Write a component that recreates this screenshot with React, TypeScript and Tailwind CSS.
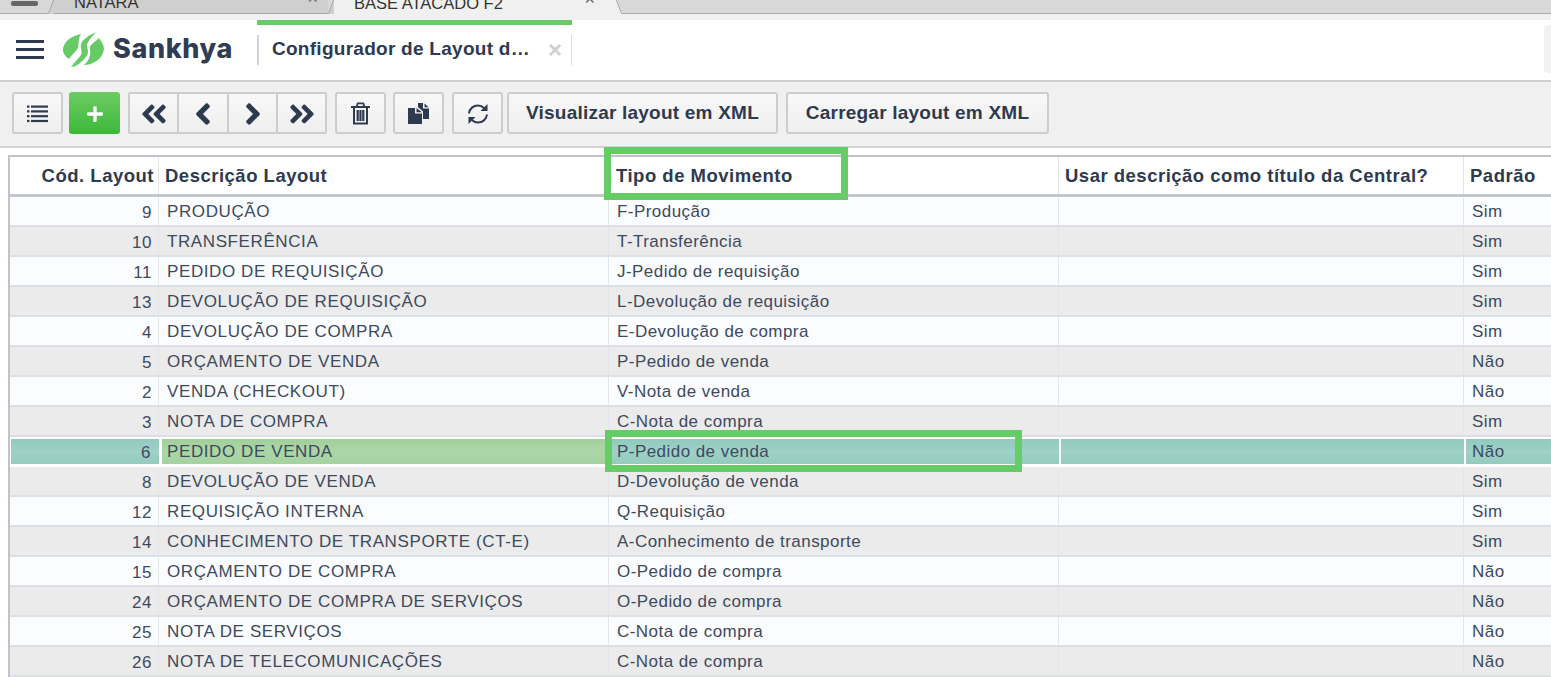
import React from "react";
import { FaPlus, FaAngleDoubleLeft, FaAngleLeft, FaAngleRight, FaAngleDoubleRight } from "react-icons/fa";

const rows: [string, string, string, string][] = [
  ["9", "PRODUÇÃO", "F-Produção", "Sim"],
  ["10", "TRANSFERÊNCIA", "T-Transferência", "Sim"],
  ["11", "PEDIDO DE REQUISIÇÃO", "J-Pedido de requisição", "Sim"],
  ["13", "DEVOLUÇÃO DE REQUISIÇÃO", "L-Devolução de requisição", "Sim"],
  ["4", "DEVOLUÇÃO DE COMPRA", "E-Devolução de compra", "Sim"],
  ["5", "ORÇAMENTO DE VENDA", "P-Pedido de venda", "Não"],
  ["2", "VENDA (CHECKOUT)", "V-Nota de venda", "Não"],
  ["3", "NOTA DE COMPRA", "C-Nota de compra", "Sim"],
  ["6", "PEDIDO DE VENDA", "P-Pedido de venda", "Não"],
  ["8", "DEVOLUÇÃO DE VENDA", "D-Devolução de venda", "Sim"],
  ["12", "REQUISIÇÃO INTERNA", "Q-Requisição", "Sim"],
  ["14", "CONHECIMENTO DE TRANSPORTE (CT-E)", "A-Conhecimento de transporte", "Sim"],
  ["15", "ORÇAMENTO DE COMPRA", "O-Pedido de compra", "Não"],
  ["24", "ORÇAMENTO DE COMPRA DE SERVIÇOS", "O-Pedido de compra", "Não"],
  ["25", "NOTA DE SERVIÇOS", "C-Nota de compra", "Não"],
  ["26", "NOTA DE TELECOMUNICAÇÕES", "C-Nota de compra", "Não"],
];

const btn =
  "flex items-center justify-center h-[42px] pt-px border-2 border-[#cdcdcd] rounded-[3px] bg-gradient-to-b from-[#f8f8f8] to-[#efefef] text-[#2d3a50]";
const navCell = "flex items-center justify-center h-full pt-px text-[#2d3a50] border-r-2 border-[#cdcdcd]";
const gridCols = "grid grid-cols-[149px_450px_450px_405px_1fr]";
const teal = "bg-gradient-to-b from-[#92c9bd] via-[#9ed1c7] to-[#95cbbf]";

function Logo() {
  return (
    <svg width="41" height="36" viewBox="0 0 41 36" className="shrink-0" aria-hidden="true">
      <g fill="#66cb66">
        <path d="M18 2C8 4 0 10 0 18C0 22 3 25 6 27C8 23 13 20 15 16C16 11 15 7 18 2Z" />
        <path d="M33 0C27 3 19 7 18 13C17 18 20 19 18 23C15 27 11 31 8 35C13 35 19 30 23 25C26 21 25 18 24 15C23 11 28 6 33 0Z" />
        <path d="M36 6C31 11 26 12 27 18C28 24 26 28 21 33C30 33 40 27 41 17C41 13 38 9 36 6Z" />
      </g>
    </svg>
  );
}

function ListIcon() {
  return (
    <svg width="21" height="18" viewBox="0 0 21 18" fill="#2d3a50" aria-hidden="true">
      <rect x="0" y="0.500" width="2.500" height="2.200" />
      <rect x="4" y="0.500" width="17" height="2.200" />
      <rect x="0" y="5.300" width="2.500" height="2.200" />
      <rect x="4" y="5.300" width="17" height="2.200" />
      <rect x="0" y="10.100" width="2.500" height="2.200" />
      <rect x="4" y="10.100" width="17" height="2.200" />
      <rect x="0" y="14.900" width="2.500" height="2.200" />
      <rect x="4" y="14.900" width="17" height="2.200" />
    </svg>
  );
}

function TrashIcon() {
  return (
    <svg width="19" height="23" viewBox="0 0 19 23" fill="#2d3a50" aria-hidden="true">
      <path d="M6 0.500H13L14 4H19V6H0V4H5ZM7.300 2.200L6.900 4H12.100L11.700 2.200Z" />
      <path d="M2 6H4V20.500H15V6H17V22.500H2Z" />
      <rect x="5.600" y="8" width="2.200" height="11" />
      <rect x="8.400" y="8" width="2.200" height="11" />
      <rect x="11.200" y="8" width="2.200" height="11" />
    </svg>
  );
}

function CopyIcon() {
  return (
    <svg width="21" height="21" viewBox="0 0 21 21" aria-hidden="true">
      <path d="M10 0H15V5.500H21V16H15V8.500L10.500 4.500H10ZM16.500 0.500L20.500 4.200H16.500Z" fill="#2d3a50" />
      <path d="M0 5H7V10.500H14V21H0ZM8.500 5L14 9.300H8.500Z" fill="#2d3a50" />
    </svg>
  );
}

function RefreshIcon() {
  return (
    <svg width="22" height="24" viewBox="0 0 22 24" fill="none" aria-hidden="true">
      <path d="M2 11.500C2.500 6.500 6.500 3.500 11 3.500C13.500 3.500 15.500 4.500 17 6" stroke="#2d3a50" strokeWidth="2" />
      <path d="M20 12.500C19.500 17.500 15.500 20.500 11 20.500C8.500 20.500 6.500 19.500 5 18" stroke="#2d3a50" strokeWidth="2" />
      <path d="M20.500 2V9H13.500Z M1.500 22V15H8.500Z" fill="#2d3a50" />
    </svg>
  );
}

function Slant({ flip, active }: { flip?: boolean; active?: boolean }) {
  return (
    <svg width="6" height="14" viewBox="0 0 6 14" className="shrink-0" aria-hidden="true">
      <path d={flip ? "M0 -1L6 14H0Z" : "M6 -1L0 14H6Z"} fill={active ? "#f0f0f0" : "#cfcfcf"} />
      <path d={flip ? "M0 -1L5.500 13.500" : "M6 -1L0.500 13.500"} stroke="#a8a8a8" strokeWidth="1" fill="none" />
    </svg>
  );
}

function Tab({ label, active, width, closeRight }: { label: string; active?: boolean; width: string; closeRight: string }) {
  return (
    <div className={`relative flex items-end h-[14px] overflow-hidden text-[#333] text-[16.500px] leading-[20px] ${width} ${active ? "bg-[#f0f0f0]" : "bg-[#cfcfcf] border-b border-[#a8a8a8]"}`}>
      <span className="absolute left-[20px] bottom-px whitespace-nowrap">{label}</span>
      <span className={`absolute bottom-[6px] text-[#666] text-[18px] leading-none ${closeRight}`}>×</span>
    </div>
  );
}

function Cell({ children, className = "" }: { children?: React.ReactNode; className?: string }) {
  return <div className={`flex items-center overflow-hidden whitespace-nowrap ${className}`}>{children}</div>;
}

export default function App() {
  return (
    <div className="relative w-[1551px] h-[677px] overflow-hidden bg-white font-['Liberation_Sans',Arial,sans-serif]">
      {/* browser tabs */}
      <div className="flex items-start h-[14px] bg-[#d8d8d8] border-b border-[#a8a8a8] box-border">
        <div className="w-[48px] shrink-0 pl-[11px]">
          <div className="w-[27px] h-[5px] mt-[1px] rounded-[2px] bg-[#666]" />
        </div>
        <div className="flex h-[14px] shrink-0">
          <Slant />
          <Tab label="NATARA" width="w-[274px]" closeRight="right-[10px]" />
          <Slant />
          <Tab label="BASE ATACADO F2" active width="w-[282px]" closeRight="right-[21px]" />
          <Slant flip active />
        </div>
      </div>
      <div className="h-[6px] bg-[#f0f0f0]" />

      {/* app header */}
      <header className="relative flex items-center h-[62px] pb-px bg-white border-b-2 border-[#cfcfcf] box-border">
        <div className="ml-[16px] w-[28px] flex flex-col gap-[5px] shrink-0">
          <span className="block h-[3px] bg-[#2d3a50]" />
          <span className="block h-[3px] bg-[#2d3a50]" />
          <span className="block h-[3px] bg-[#2d3a50]" />
        </div>
        <div className="ml-[19px]"><Logo /></div>
        <span className="ml-[9px] mb-[2px] w-[130px] font-['Inter',sans-serif] font-extrabold text-[27px] leading-none tracking-[0.600px] text-[#2f3c52]">Sankhya</span>
        <div className="absolute left-[257px] top-0 w-[315px] h-[59px] flex items-center">
          <div className="absolute left-0 top-0 right-0 h-[5px] bg-[#66cd66]" />
          <div className="w-[2px] h-[30px] mt-[1px] bg-[#cdd4de]" />
          <span className="ml-[13px] text-[19px] font-bold tracking-[0.270px] text-[#2d3a50] whitespace-nowrap">Configurador de Layout d…</span>
          <span className="absolute left-[291px] top-[18px] text-[#cfcfcf] text-[24px] leading-[24px] font-bold">×</span>
          <div className="absolute right-[0px] top-[15px] w-px h-[30px] bg-[#dcdcdc]" />
        </div>
        <div className="absolute right-0 top-[5px] w-[7px] h-[48px] rounded-l-[4px] bg-[#f2f2f2]" />
      </header>

      {/* toolbar */}
      <div className="flex items-center h-[66px] pl-[12px] pb-[2px] bg-[#f0f0f0] border-b-2 border-[#d4d4d4] box-border">
        <button className={`${btn} w-[51px]`}><ListIcon /></button>
        <button className="ml-[6px] w-[51px] h-[42px] pt-px flex items-center justify-center rounded-[3px] bg-gradient-to-b from-[#6bcc62] to-[#3cb83a] text-white"><FaPlus size={18} /></button>
        <div className="ml-[8px] w-[199px] h-[42px] grid grid-cols-[49px_50px_49px_1fr] border-2 border-[#cdcdcd] rounded-[2px] bg-gradient-to-b from-[#f8f8f8] to-[#efefef]">
          <div className={navCell}><FaAngleDoubleLeft size={30} /></div>
          <div className={navCell}><FaAngleLeft size={34} /></div>
          <div className={navCell}><FaAngleRight size={34} /></div>
          <div className="flex items-center justify-center h-full pt-px text-[#2d3a50]"><FaAngleDoubleRight size={30} /></div>
        </div>
        <button className={`${btn} ml-[8px] w-[51px]`}><TrashIcon /></button>
        <button className={`${btn} ml-[7px] w-[51px]`}><CopyIcon /></button>
        <button className={`${btn} ml-[8px] w-[51px]`}><RefreshIcon /></button>
        <button className={`${btn} ml-[4px] w-[271px] text-[19px] font-bold tracking-[0.220px] whitespace-nowrap`}>Visualizar layout em XML</button>
        <button className={`${btn} ml-[8px] w-[263px] text-[19px] font-bold tracking-[0.220px] whitespace-nowrap`}>Carregar layout em XML</button>
      </div>

      {/* table */}
      <div className="ml-[8px] mt-[7px] border-l-2 border-t-2 border-[#c0c4c8] box-border">
        <div className={`${gridCols} h-[40px] border-b-[3px] border-[#c4c8cc] box-border text-[18.500px] font-bold tracking-[0.500px] text-[#2d3a50]`}>
          <Cell className="justify-end pr-[4px] border-r border-[#e2e5e9]">Cód. Layout</Cell>
          <Cell className="pl-[6px] border-r border-[#e2e5e9]">Descrição Layout</Cell>
          <Cell className="pl-[7px] border-r border-[#e2e5e9]">Tipo de Movimento</Cell>
          <Cell className="pl-[6px] border-r border-[#e2e5e9]">Usar descrição como título da Central?</Cell>
          <Cell className="pl-[6px]">Padrão</Cell>
        </div>
        {rows.map((r, i) => {
          const selected = i === 8;
          if (selected) {
            return (
              <div key={r[0]} className={`${gridCols} h-[30px] bg-white pt-[2px] pb-[3px] box-border text-[17px] tracking-[0.500px] text-[#3d4a5e]`}>
                <Cell className={`justify-end pr-[8px] pt-[3px] ml-px ${teal}`}>{r[0]}</Cell>
                <Cell className="pl-[5px] ml-[3px] tracking-[0.600px] bg-gradient-to-b from-[#a0d09c] via-[#add6a6] to-[#a4d2a0]">{r[1]}</Cell>
                <Cell className={`pl-[8px] tracking-[0.450px] ${teal}`}>{r[2]}</Cell>
                <Cell className={`ml-[2px] ${teal}`} />
                <Cell className={`pl-[6px] ml-[2px] ${teal}`}>{r[3]}</Cell>
              </div>
            );
          }
          return (
            <div key={r[0]} className={`${gridCols} h-[30px] border-b-2 border-[#dcdfe3] box-border text-[17px] tracking-[0.500px] text-[#3d4a5e] ${i % 2 === 0 ? "bg-[#fbfcfe]" : "bg-[#ebebeb]"}`}>
              <Cell className="justify-end pr-[6px] pt-[4px] border-r border-[#e2e5e9]">{r[0]}</Cell>
              <Cell className="pl-[8px] pt-[2px] tracking-[0.600px] border-r border-[#e2e5e9]">{r[1]}</Cell>
              <Cell className="pl-[8px] pt-[2px] tracking-[0.450px] border-r border-[#e2e5e9]">{r[2]}</Cell>
              <Cell className="border-r border-[#e2e5e9]" />
              <Cell className="pl-[8px] pt-[2px]">{r[3]}</Cell>
            </div>
          );
        })}
      </div>

      {/* annotation outlines */}
      <div className="absolute left-[604px] top-[147px] w-[244px] h-[53px] border-[7px] border-[#66cd66] pointer-events-none" />
      <div className="absolute left-[605px] top-[430px] w-[417px] h-[42px] border-[7px] border-[#66cd66] pointer-events-none" />
    </div>
  );
}
